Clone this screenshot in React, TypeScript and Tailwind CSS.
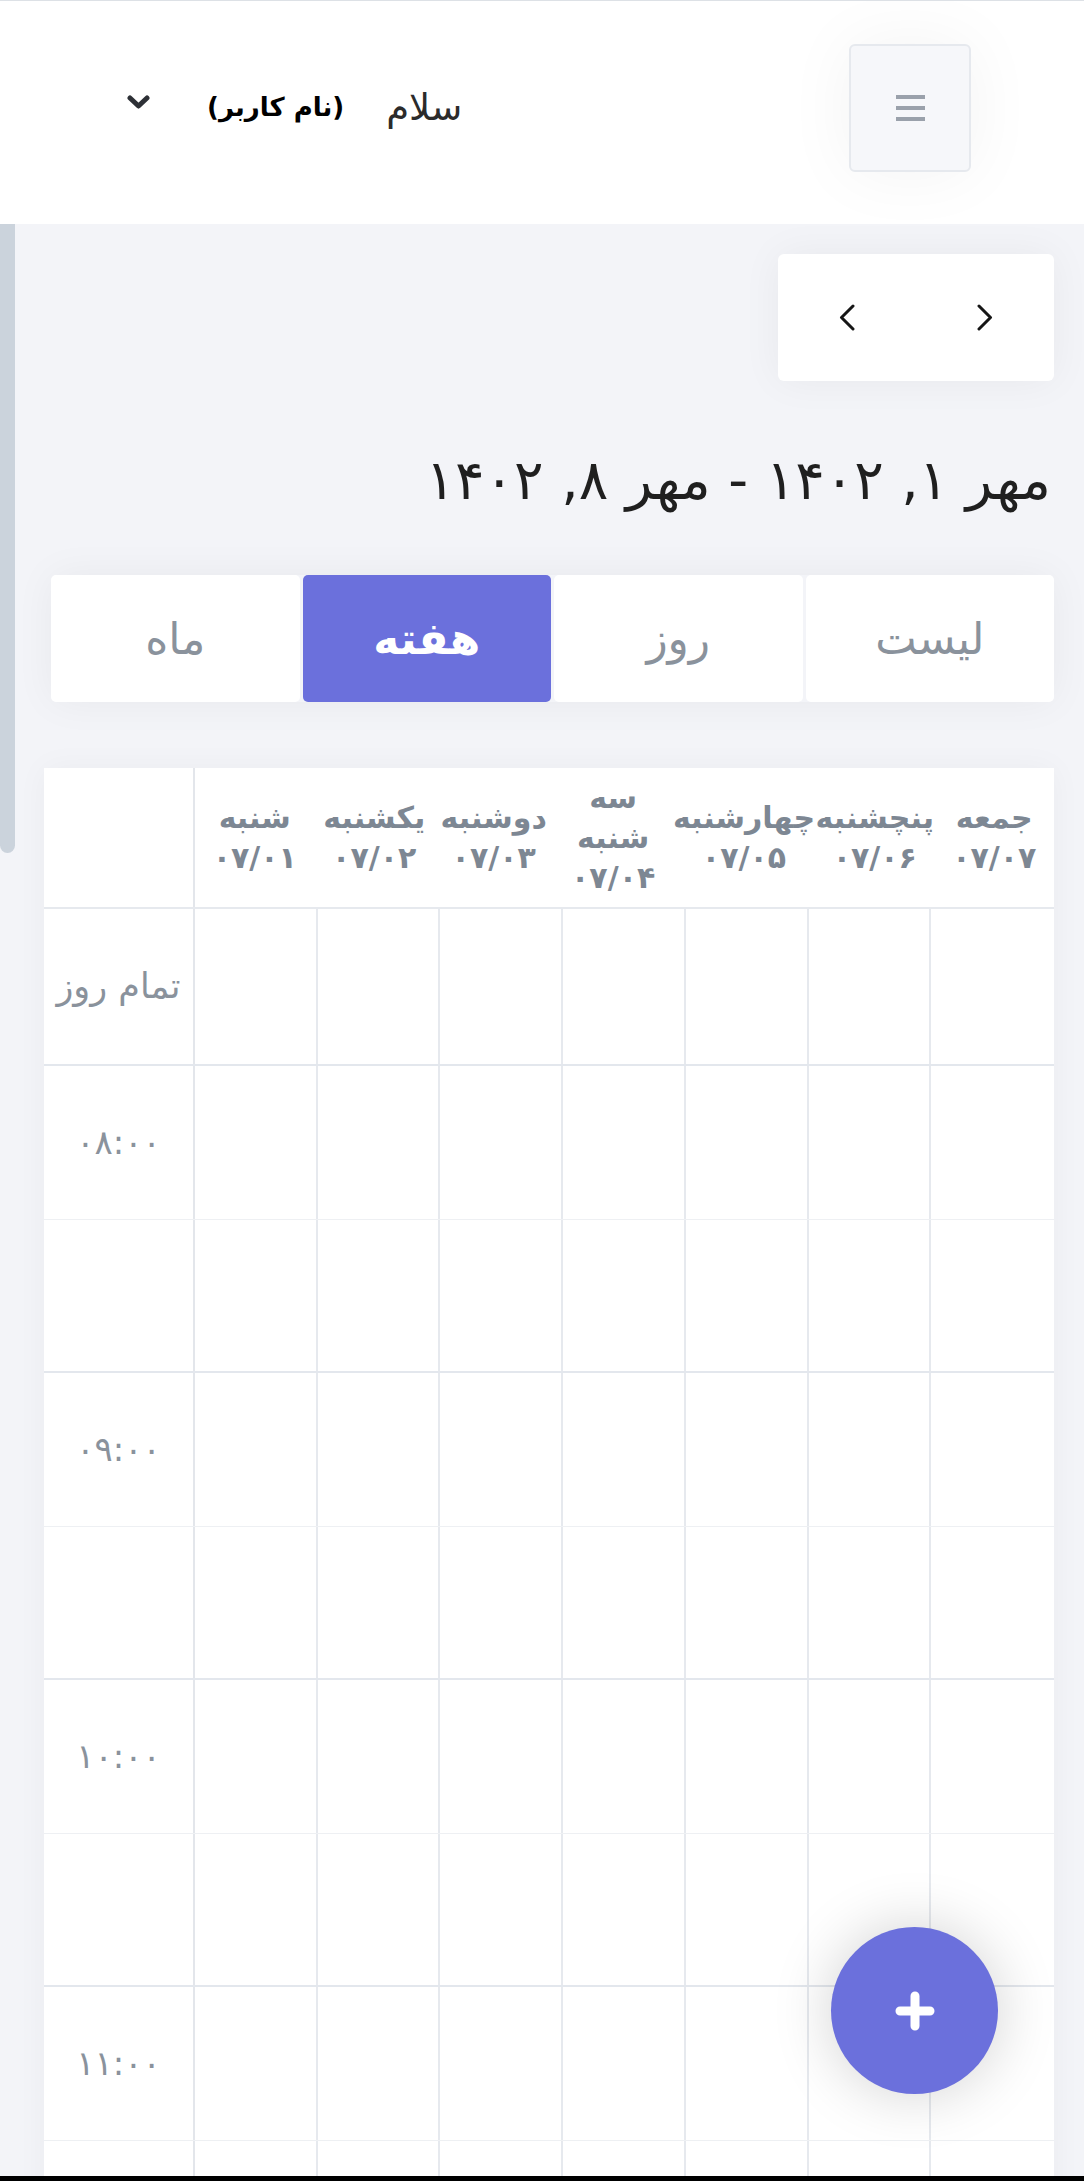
import React from 'react';

const days = [
  { name: ['شنبه'], date: '۰۷/۰۱' },
  { name: ['یکشنبه'], date: '۰۷/۰۲' },
  { name: ['دوشنبه'], date: '۰۷/۰۳' },
  { name: ['سه', 'شنبه'], date: '۰۷/۰۴' },
  { name: ['چهارشنبه'], date: '۰۷/۰۵' },
  { name: ['پنچشنبه'], date: '۰۷/۰۶' },
  { name: ['جمعه'], date: '۰۷/۰۷' },
];

const slots = ['۰۸:۰۰', '', '۰۹:۰۰', '', '۱۰:۰۰', '', '۱۱:۰۰', ''];
const tabs = ['لیست', 'روز', 'هفته', 'ماه'];

function Chevron({ dir }: { dir: 'left' | 'right' }) {
  return (
    <svg width="16" height="27" viewBox="0 0 16 27" fill="none">
      <polyline
        points={dir === 'left' ? '14,2 2.5,13.5 14,25' : '2,2 13.5,13.5 2,25'}
        stroke="#161616"
        strokeWidth="3"
        strokeLinecap="round"
        strokeLinejoin="round"
      />
    </svg>
  );
}

export default function App() {
  return (
    <div
      dir="rtl"
      className="relative h-[2181px] overflow-hidden bg-[#f3f4f8] border-t border-[#dde1e6] font-['DejaVu_Sans',sans-serif]"
    >
      {/* Top bar */}
      <header className="h-[223px] bg-white flex items-center justify-between pr-[113px] pl-[127px] pb-[10px]">
        <button className="w-[122px] h-[128px] bg-[#f6f7fa] border-2 border-[#e6e9ee] rounded-[6px] shadow-[0_0_70px_rgba(0,0,0,0.05)] flex flex-col items-center justify-center gap-[7px]">
          <span className="block w-[29px] h-[4px] bg-[#9aa1ab]" />
          <span className="block w-[29px] h-[4px] bg-[#9aa1ab]" />
          <span className="block w-[29px] h-[4px] bg-[#9aa1ab]" />
        </button>

        <div className="flex items-center">
          <span className="text-[37px] text-[#2b2b2b]">سلام</span>
          <span className="mr-[42px] text-[26px] font-bold text-black">(نام کاربر)</span>
          <svg className="mr-[57px] mb-[12px]" width="23" height="14" viewBox="0 0 23 14" fill="none">
            <polyline points="3,3 11.5,11 20,3" stroke="#2d3036" strokeWidth="5" strokeLinecap="round" strokeLinejoin="round" />
          </svg>
        </div>
      </header>

      {/* Main */}
      <main className="relative pt-[30px]">
        <div className="absolute left-0 top-0 w-[15px] h-[629px] bg-[#cbd3dc] rounded-b-[8px]" />

        <div className="mr-[30px] ml-[44px]">
          {/* Prev / next */}
          <div className="flex">
            <div className="w-[276px] h-[127px] bg-white rounded-[6px] shadow-[0_0_40px_rgba(0,0,0,0.05)] grid grid-cols-2">
              <button className="flex items-center justify-center">
                <Chevron dir="right" />
              </button>
              <button className="flex items-center justify-center">
                <Chevron dir="left" />
              </button>
            </div>
          </div>

          <h1 className="mt-[69px] mr-[3px] text-[55px] leading-[60px] font-normal text-[#1f1f1f] whitespace-nowrap">
            مهر ۱, ۱۴۰۲ - مهر ۸, ۱۴۰۲
          </h1>

          {/* View tabs */}
          <div className="mt-[65px] ml-[7px] h-[127px] grid grid-cols-4 gap-[3px] rounded-[6px] shadow-[0_0_40px_rgba(0,0,0,0.05)]">
            {tabs.map((t) => (
              <button
                key={t}
                className={`rounded-[5px] flex items-center justify-center text-[44px] ${
                  t === 'هفته' ? 'bg-[#6b70dc] text-white font-bold' : 'bg-white text-[#8a929c]'
                }`}
              >
                {t}
              </button>
            ))}
          </div>

          {/* Week grid */}
          <div dir="ltr" className="mt-[66px] bg-white shadow-[0_0_30px_rgba(0,0,0,0.04)]">
            <div className="grid grid-cols-[151px_repeat(7,1fr)] h-[141px] border-b-2 border-[#e6e9ee]">
              <div className="border-r-2 border-[#e3e6eb]" />
              {days.map((d) => (
                <div
                  key={d.date}
                  className="flex flex-col items-center justify-center text-[30px] leading-[40px] font-bold text-[#7d8793] whitespace-nowrap"
                >
                  {d.name.map((n) => (
                    <span key={n}>{n}</span>
                  ))}
                  <span>{d.date}</span>
                </div>
              ))}
            </div>

            <div className="grid grid-cols-[151px_repeat(7,1fr)] h-[157px] border-b-2 border-[#e3e7ed]">
              <div className="border-r-2 border-[#e3e6eb] flex items-center justify-center text-[35px] text-[#8a929c]">
                تمام روز
              </div>
              {days.map((d, i) => (
                <div key={d.date} className={i < 6 ? 'border-r-2 border-[#e6e9ee]' : ''} />
              ))}
            </div>

            {slots.map((s, idx) => (
              <div
                key={idx}
                className={`grid grid-cols-[151px_repeat(7,1fr)] h-[153.5px] ${
                  idx % 2 === 0 ? 'border-b border-[#eef0f3]' : 'border-b-2 border-[#e3e7ed]'
                }`}
              >
                <div className="border-r-2 border-[#e3e6eb] flex items-center justify-center text-[34px] text-[#8a929c]">
                  {s}
                </div>
                {days.map((d, i) => (
                  <div key={d.date} className={i < 6 ? 'border-r-2 border-[#e6e9ee]' : ''} />
                ))}
              </div>
            ))}
          </div>
        </div>
      </main>

      {/* Add button */}
      <button className="absolute right-[86px] bottom-[87px] w-[167px] h-[167px] rounded-full bg-[#6b70dc] shadow-[0_0_60px_rgba(0,0,0,0.18)] flex items-center justify-center">
        <svg width="40" height="40" viewBox="0 0 40 40" fill="none">
          <path d="M20 5v30M5 20h30" stroke="#fff" strokeWidth="9" strokeLinecap="round" />
        </svg>
      </button>

      <div className="absolute left-0 bottom-0 w-full h-[5px] bg-black" />
    </div>
  );
}
